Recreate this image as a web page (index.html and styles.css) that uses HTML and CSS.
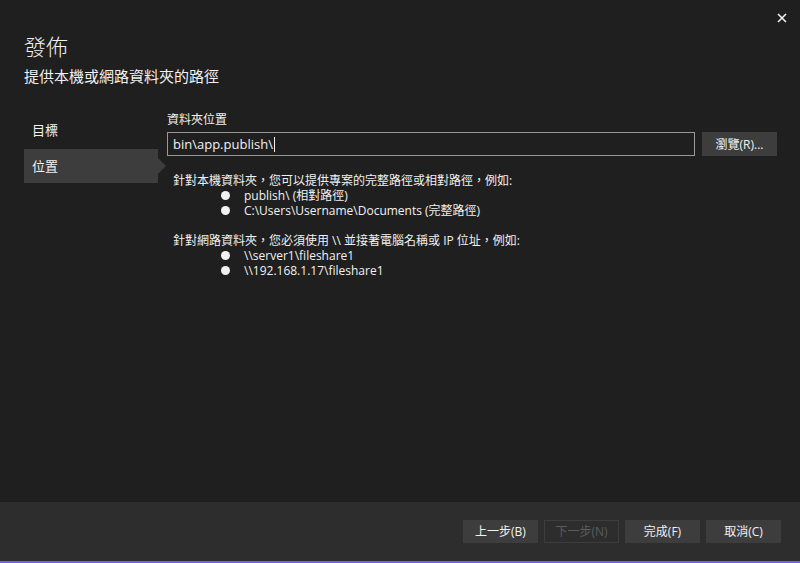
FILE: index.html
```html
<!DOCTYPE html>
<html>
<head>
  <meta charset="UTF-8">
  <link rel="stylesheet" href="styles.css">
</head>
<body>
  <div class="dialog">
    <div class="titlebar">
      <span class="close-btn">
        <svg width="10" height="10" viewBox="0 0 10 10"><path d="M1 1L9 9M9 1L1 9" stroke="#f1f1f1" stroke-width="1.6"/></svg>
      </span>
    </div>
    <div class="header">
      <div class="title">發佈</div>
      <div class="subtitle">提供本機或網路資料夾的路徑</div>
    </div>
    <div class="main">
      <div class="nav">
        <div class="nav-item">目標</div>
        <div class="nav-item active">位置</div>
      </div>
      <div class="content">
        <div class="field-label">資料夾位置</div>
        <div class="path-row">
          <div class="path-input">bin\app.publish\<span class="caret"></span></div>
          <button class="btn browse-btn">瀏覽(R)...</button>
        </div>
        <div class="help">
          <div class="help-line">針對本機資料夾，您可以提供專案的完整路徑或相對路徑，例如:</div>
          <ul class="help-list">
            <li>publish\ (相對路徑)</li>
            <li>C:\Users\Username\Documents (完整路徑)</li>
          </ul>
          <div class="help-line spaced">針對網路資料夾，您必須使用 \\ 並接著電腦名稱或 IP 位址，例如:</div>
          <ul class="help-list">
            <li>\\server1\fileshare1</li>
            <li>\\192.168.1.17\fileshare1</li>
          </ul>
        </div>
      </div>
    </div>
    <div class="footer">
      <button class="btn">上一步(B)</button>
      <button class="btn disabled">下一步(N)</button>
      <button class="btn">完成(F)</button>
      <button class="btn">取消(C)</button>
    </div>
  </div>
</body>
</html>
```

FILE: styles.css
```css
html, body {
  margin: 0;
  padding: 0;
  background: #1f1f1f;
}
body {
  font-family: "Open Sans", "Noto Sans CJK TC", sans-serif;
  color: #f1f1f1;
  font-size: 12px;
}
.dialog {
  width: 800px;
  height: 563px;
  display: flex;
  flex-direction: column;
  overflow: hidden;
}
.titlebar {
  height: 30px;
  display: flex;
  justify-content: flex-end;
}
.close-btn {
  width: 10px;
  height: 10px;
  margin: 13px 13px 0 0;
  display: flex;
}
.header {
  padding: 0 24px;
}
.title {
  font-size: 22px;
  line-height: 32px;
  font-weight: 300;
}
.subtitle {
  font-size: 15px;
  line-height: 20px;
  margin-top: 4px;
}
.main {
  flex: 1;
  display: flex;
  padding: 25px 0 0 24px;
}
.nav {
  width: 134px;
  padding-top: 2px;
  display: flex;
  flex-direction: column;
  gap: 2px;
}
.nav-item {
  height: 34px;
  line-height: 34px;
  padding-left: 8px;
  font-size: 13px;
  position: relative;
}
.nav-item.active {
  background: #3d3d3d;
}
.nav-item.active::after {
  content: "";
  position: absolute;
  right: -8px;
  top: 9px;
  border-left: 8px solid #3d3d3d;
  border-top: 8px solid transparent;
  border-bottom: 8px solid transparent;
}
.content {
  margin-left: 9px;
  width: 610px;
}
.field-label {
  font-size: 12px;
  line-height: 18px;
}
.path-row {
  display: flex;
  gap: 7px;
  margin-top: 3px;
}
.path-input {
  width: 521px;
  height: 22px;
  line-height: 22px;
  border: 1px solid #999999;
  padding-left: 5px;
  font-size: 13px;
  display: flex;
  align-items: center;
}
.caret {
  width: 1px;
  height: 15px;
  background: #f1f1f1;
  margin-left: 1px;
}
.btn {
  width: 75px;
  height: 23px;
  padding: 0;
  border: 1px solid #3d3d3d;
  background: #3d3d3d;
  color: #f1f1f1;
  font-family: "Open Sans", "Noto Sans CJK TC", sans-serif;
  font-size: 12px;
  line-height: 21px;
}
.browse-btn {
  height: 24px;
}
.btn.disabled {
  background: transparent;
  color: #5c5c5c;
}
.help {
  margin-top: 17px;
  padding-left: 6px;
}
.help-line {
  line-height: 15px;
}
.help-line.spaced {
  margin-top: 15px;
}
.help-list {
  list-style: none;
  margin: 0;
  padding: 0 0 0 48px;
}
.help-list li {
  line-height: 15px;
  display: flex;
  align-items: center;
}
.help-list li::before {
  content: "";
  width: 9px;
  height: 9px;
  border-radius: 50%;
  background: #f1f1f1;
  margin-right: 14px;
}
.footer {
  height: 59px;
  background: #2d2d2d;
  border-bottom: 2px solid #7260e8;
  display: flex;
  justify-content: flex-end;
  align-items: center;
  gap: 6px;
  padding-right: 19px;
}
```
